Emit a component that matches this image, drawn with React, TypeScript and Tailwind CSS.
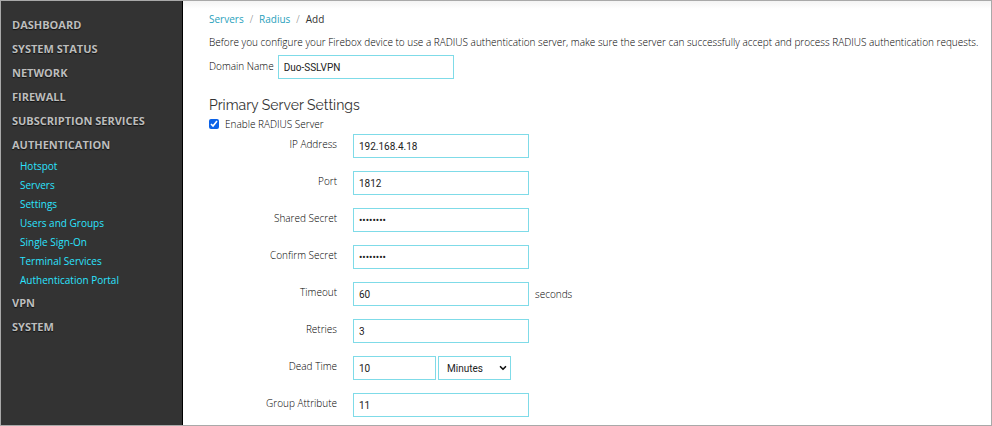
import type { ReactNode } from "react";
import { ChevronDown } from "lucide-react";

const authLinks = [
  "Hotspot",
  "Servers",
  "Settings",
  "Users and Groups",
  "Single Sign-On",
  "Terminal Services",
  "Authentication Portal",
];

const fieldClass =
  "h-6 border border-[#7fdbe8] bg-white px-[5px] font-['Roboto','Liberation_Sans',sans-serif] text-[10px] font-normal text-[#222]";

function NavItem({ label, children }: { label: string; children?: ReactNode }) {
  return (
    <li>
      <a
        href="#"
        className="block pl-[11px] text-[11px] leading-6 font-bold text-[#bdbdbd] [text-shadow:0_1px_1px_#111]"
      >
        {label}
      </a>
      {children}
    </li>
  );
}

function Sidebar() {
  return (
    <nav className="w-[182px] shrink-0 border-r border-black bg-[#333] pt-3">
      <ul>
        <NavItem label="DASHBOARD" />
        <NavItem label="SYSTEM STATUS" />
        <NavItem label="NETWORK" />
        <NavItem label="FIREWALL" />
        <NavItem label="SUBSCRIPTION SERVICES" />
        <NavItem label="AUTHENTICATION">
          <ul className="pb-px pl-[19px] text-[10px] leading-[19px] font-normal text-[#2be4ff]">
            {authLinks.map((link) => (
              <li key={link}>
                <a href="#">{link}</a>
              </li>
            ))}
          </ul>
        </NavItem>
        <NavItem label="VPN" />
        <NavItem label="SYSTEM" />
      </ul>
    </nav>
  );
}

function Row({ id, label, children }: { id: string; label: string; children: ReactNode }) {
  return (
    <div className="flex items-start gap-4">
      <label htmlFor={id} className="w-32 text-right leading-5">
        {label}
      </label>
      <div className="flex items-center">{children}</div>
    </div>
  );
}

function TextRow({
  id,
  label,
  value,
  type = "text",
  suffix,
}: {
  id: string;
  label: string;
  value: string;
  type?: string;
  suffix?: string;
}) {
  return (
    <Row id={id} label={label}>
      <input id={id} type={type} defaultValue={value} className={`${fieldClass} w-44`} />
      {suffix && <span className="ml-[6px]">{suffix}</span>}
    </Row>
  );
}

export default function App() {
  return (
    <div className="flex min-h-screen border border-[#a9a9a9] bg-white font-['Open_Sans','Noto_Sans',sans-serif] text-[10px] font-light text-black">
      <Sidebar />
      <main className="min-w-0 flex-1 bg-linear-to-b from-[#f4f4f4] to-white to-[8px] pt-2 pl-[26px]">
        <nav aria-label="Breadcrumb" className="flex gap-[6px] leading-5">
          <a href="#" className="font-normal text-[#2a9fbc]">Servers</a>
          <span className="text-[#777]">/</span>
          <a href="#" className="font-normal text-[#2a9fbc]">Radius</a>
          <span className="text-[#777]">/</span>
          <span className="font-normal text-[#333]">Add</span>
        </nav>
        <p className="mt-[3px] leading-5">
          Before you configure your Firebox device to use a RADIUS authentication server, make sure the server can
          successfully accept and process RADIUS authentication requests.
        </p>
        <div className="mt-[3px] flex items-start gap-1">
          <label htmlFor="domain" className="leading-[22px]">Domain Name</label>
          <input id="domain" type="text" defaultValue="Duo-SSLVPN" className={`${fieldClass} w-44`} />
        </div>
        <h2 className="mt-4 font-['Raleway','Open_Sans',sans-serif] text-[14px] leading-5 font-normal text-[#333]">
          Primary Server Settings
        </h2>
        <div className="flex items-center gap-[6px]">
          <input id="enable" type="checkbox" defaultChecked className="size-[10px] accent-[#0b62e8]" />
          <label htmlFor="enable" className="leading-[18px]">Enable RADIUS Server</label>
        </div>
        <form className="flex flex-col gap-[13px] pt-px pb-2">
          <TextRow id="ip" label="IP Address" value="192.168.4.18" />
          <TextRow id="port" label="Port" value="1812" />
          <TextRow id="secret" label="Shared Secret" value="password" type="password" />
          <TextRow id="confirm" label="Confirm Secret" value="password" type="password" />
          <TextRow id="timeout" label="Timeout" value="60" suffix="seconds" />
          <TextRow id="retries" label="Retries" value="3" />
          <Row id="dead" label="Dead Time">
            <input id="dead" type="text" defaultValue="10" className={`${fieldClass} w-[83px]`} />
            <div className="relative ml-[2px]">
              <select aria-label="Dead time unit" className={`${fieldClass} w-[73px] appearance-none pl-2`}>
                <option>Minutes</option>
                <option>Hours</option>
              </select>
              <ChevronDown
                size={10}
                strokeWidth={4}
                className="pointer-events-none absolute top-[7px] right-[3px] text-[#111]"
              />
            </div>
          </Row>
          <TextRow id="group" label="Group Attribute" value="11" />
        </form>
      </main>
    </div>
  );
}
